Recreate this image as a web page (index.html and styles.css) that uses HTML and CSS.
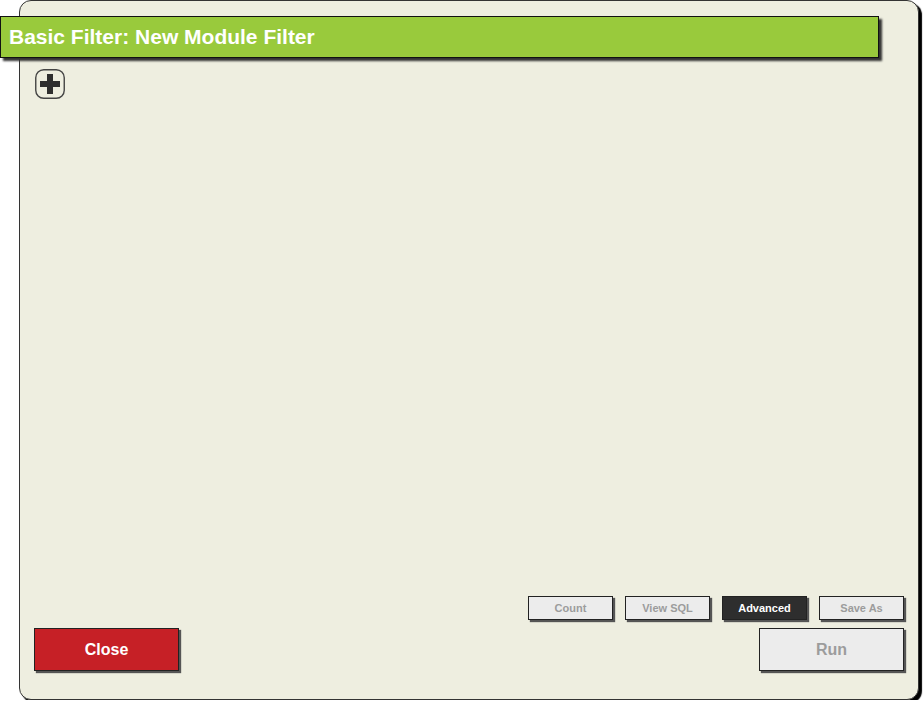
FILE: index.html
```html
<!DOCTYPE html>
<html>
<head>
<meta charset="utf-8">
<link rel="stylesheet" href="styles.css">
</head>
<body>
<div class="panel">
  <div class="header">Basic Filter: New Module Filter</div>
  <div class="add">
    <svg width="30" height="30" viewBox="0 0 30 30">
      <rect x="0.75" y="0.75" width="28.5" height="28.5" rx="8" ry="8" fill="none" stroke="#444" stroke-width="1.4"/>
      <rect x="12" y="5" width="6" height="20" fill="#2f2f2f"/>
      <rect x="5" y="12" width="20" height="6" fill="#2f2f2f"/>
    </svg>
  </div>
  <div class="spacer"></div>
  <div class="tools">
    <button class="btn small">Count</button>
    <button class="btn small">View SQL</button>
    <button class="btn small dark">Advanced</button>
    <button class="btn small">Save As</button>
  </div>
  <div class="actions">
    <button class="btn big close">Close</button>
    <button class="btn big">Run</button>
  </div>
</div>
</body>
</html>
```
FILE: styles.css
```css
html, body {
  margin: 0;
  padding: 0;
  background: #ffffff;
  font-family: "Liberation Sans", Arial, sans-serif;
}
.panel {
  box-sizing: border-box;
  margin-left: 19px;
  width: 900px;
  height: 700px;
  background: #eeeee0;
  border: 1px solid #333;
  border-radius: 12px;
  box-shadow: 3px 3px 1px #000;
  display: flex;
  flex-direction: column;
  padding: 0 14px 28px 14px;
}
.header {
  box-sizing: border-box;
  margin-left: -34px;
  margin-top: 15px;
  width: 879px;
  height: 42px;
  background: #99ca3c;
  border: 1px solid #111;
  box-shadow: 3px 3px 2px #333;
  color: #fff;
  font-weight: bold;
  font-size: 21px;
  line-height: 40px;
  padding-left: 8px;
}
.add {
  margin-top: 11px;
  margin-left: 1px;
  width: 30px;
  height: 30px;
}
.add svg { display: block; }
.spacer { flex: 1; }
.tools {
  display: flex;
  justify-content: flex-end;
  gap: 12px;
  margin-bottom: 8px;
}
.actions {
  display: flex;
  justify-content: space-between;
}
.btn {
  box-sizing: border-box;
  font-family: "Liberation Sans", Arial, sans-serif;
  font-weight: bold;
  border: 1px solid #222;
  background: #ececec;
  color: #9c9c9c;
  padding: 0;
  margin: 0;
  box-shadow: 2px 2px 1px #555;
}
.small {
  width: 85px;
  height: 24px;
  font-size: 11px;
}
.dark {
  background: #2e2e2e;
  color: #fff;
}
.big {
  width: 145px;
  height: 43px;
  font-size: 16px;
}
.close {
  background: #c62026;
  color: #fff;
}
```
